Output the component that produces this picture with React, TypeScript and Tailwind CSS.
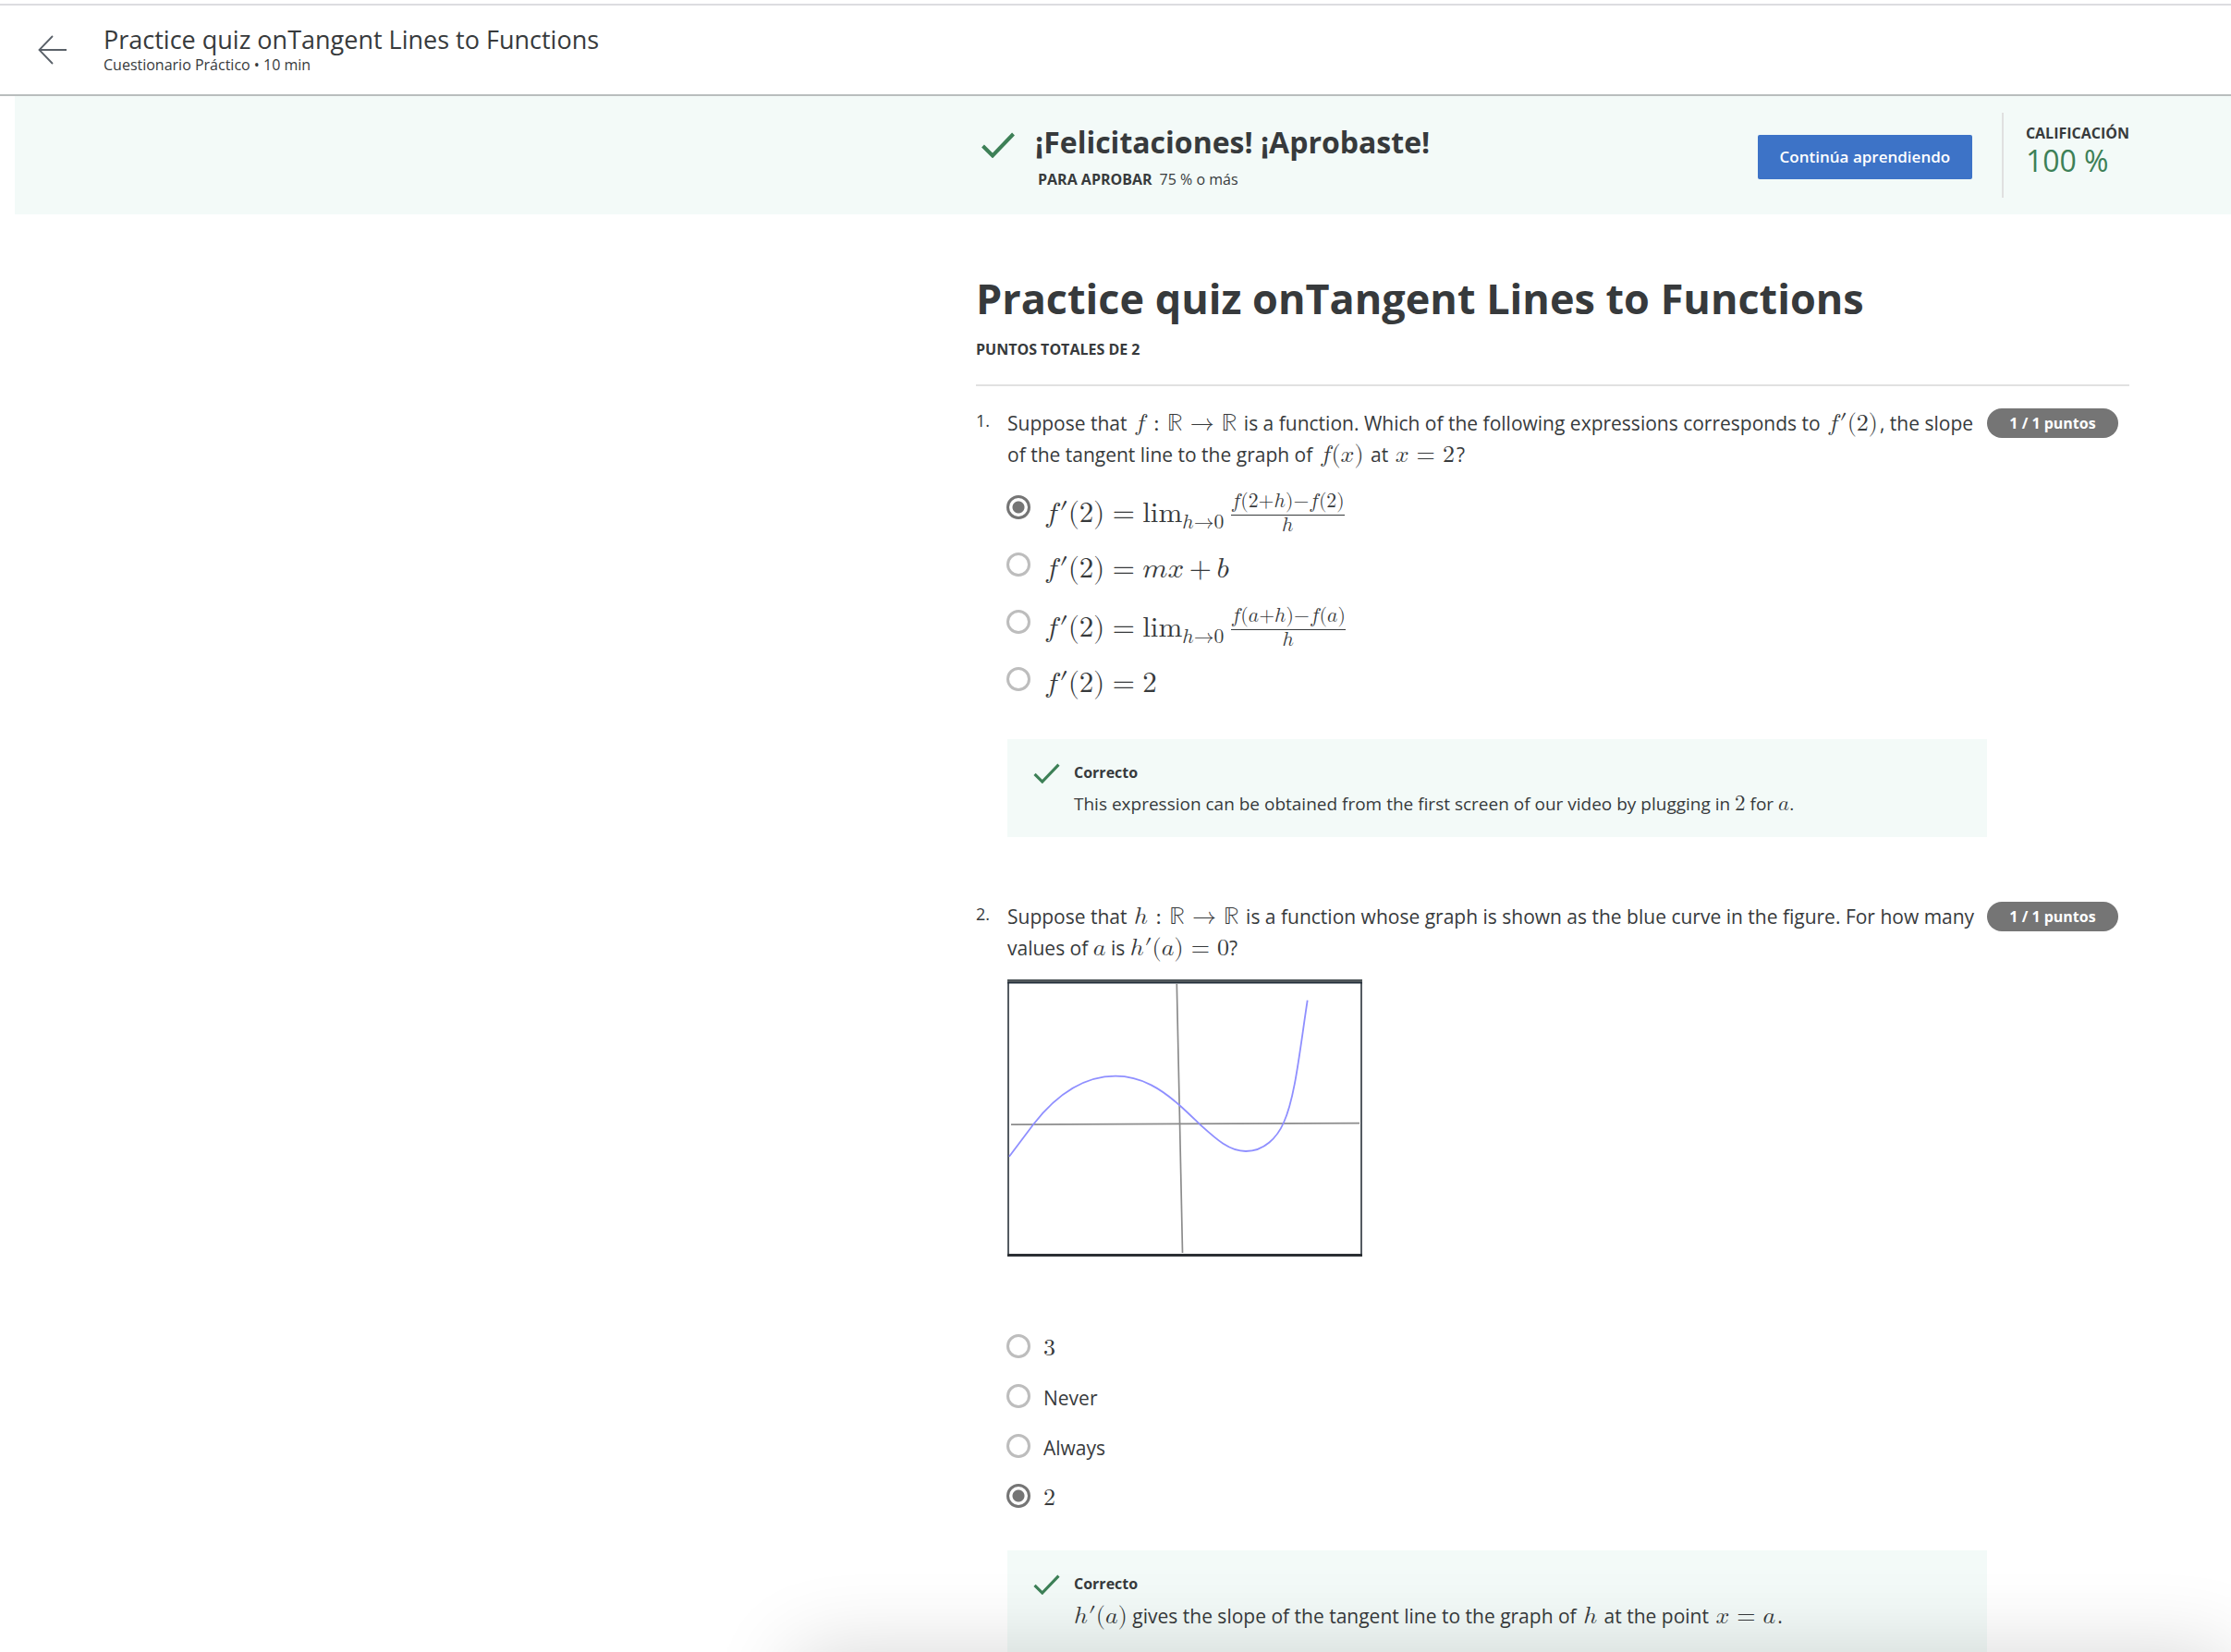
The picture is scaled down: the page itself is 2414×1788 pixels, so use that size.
import type { ReactNode } from "react";

const mathFont = "font-['Latin_Modern_Math','Liberation_Serif',serif]";

function Op({ children, gap = "0" }: { children: string; gap?: string }) {
  return (
    <mo stretchy="false" lspace={gap} rspace={gap}>
      {children}
    </mo>
  );
}

function Rel({ children, gap = "0.31em" }: { children: string; gap?: string }) {
  return <Op gap={gap}>{children}</Op>;
}

function Prime({ of }: { of: string }) {
  return (
    <mrow>
      <mi>{of}</mi>
      <mo lspace="0.03em" rspace="0">′</mo>
    </mrow>
  );
}

function Paren({ children }: { children: ReactNode }) {
  return (
    <>
      <Op>(</Op>
      {children}
      <Op>)</Op>
    </>
  );
}

function M({ children, size = "mx-[2px] text-[26px]" }: { children: ReactNode; size?: string }) {
  return <math className={`${mathFont} ${size} leading-none`}>{children}</math>;
}

function Check({ className }: { className: string }) {
  return (
    <svg viewBox="0 0 36 28" className={className} fill="none" stroke="#3d8057" strokeWidth="4" aria-hidden="true">
      <path d="M1.5 15 L12 25.5 L34.5 2" />
    </svg>
  );
}

function Radio({ name, checked, id }: { name: string; checked?: boolean; id: string }) {
  return (
    <input
      type="radio"
      id={id}
      name={name}
      defaultChecked={checked}
      className="m-0 size-[26px] shrink-0 appearance-none rounded-full border-[3px] border-[#bdbdbd] bg-white checked:border-[#757575] checked:bg-[radial-gradient(circle,#757575_0_6px,white_7px)]"
    />
  );
}

function Question({ n, text, children }: { n: number; text: ReactNode; children: ReactNode }) {
  return (
    <section className="flex items-start">
      <span className="w-[34px] shrink-0 text-[18px] leading-[30px]">{n}.</span>
      <div className="min-w-0 flex-1 pt-px">
        <p className="text-[21px] leading-[34px]">{text}</p>
        {children}
      </div>
      <div className="mt-[2px] mr-3 flex h-8 w-[142px] shrink-0 items-center justify-center rounded-full bg-[#757575] text-[16px] font-bold text-white">
        1 / 1 puntos
      </div>
    </section>
  );
}

function LimitQuotient({ v }: { v: ReactNode }) {
  return (
    <>
      <msub>
        <mi>lim</mi>
        <mrow>
          <mi>h</mi>
          <Op>→</Op>
          <mn>0</mn>
        </mrow>
      </msub>
      <mspace width="0.18em" />
      <mfrac>
        <mrow>
          <mi>f</mi>
          <Paren>
            {v}
            <Op>+</Op>
            <mi>h</mi>
          </Paren>
          <Op>−</Op>
          <mi>f</mi>
          <Paren>{v}</Paren>
        </mrow>
        <mi>h</mi>
      </mfrac>
    </>
  );
}

function Feedback({ children }: { children: ReactNode }) {
  return (
    <div className="flex gap-[15px] bg-[#f3faf8] pt-6 pr-6 pb-[14px] pl-7">
      <Check className="mt-[2px] h-[22px] w-[29px] shrink-0" />
      <div>
        <p className="text-[16px] leading-6 font-bold">Correcto</p>
        {children}
      </div>
    </div>
  );
}

const derivative = (
  <>
    <Prime of="f" />
    <Paren>
      <mn>2</mn>
    </Paren>
    <Rel gap="0.27em">=</Rel>
  </>
);

const firstOptions: ReactNode[] = [
  <LimitQuotient v={<mn>2</mn>} />,
  <>
    <mi>m</mi>
    <mi>x</mi>
    <Op gap="0.18em">+</Op>
    <mi>b</mi>
  </>,
  <LimitQuotient v={<mi>a</mi>} />,
  <mn>2</mn>,
];

const secondOptions: ReactNode[] = [
  <M size="text-[26px]"><mn>3</mn></M>,
  "Never",
  "Always",
  <M size="text-[26px]"><mn>2</mn></M>,
];

function Graph() {
  return (
    <svg viewBox="0 0 384 300" className="mt-[17px] block h-[300px] w-[384px]" fill="none" role="img" aria-label="Graph of h">
      <path d="M1 0V300M383 0V300" stroke="#2b333b" strokeWidth="1.6" />
      <path d="M0 1.5H384" stroke="#4e5559" strokeWidth="3" />
      <path d="M0 3.8H384" stroke="#232e3a" strokeWidth="1.6" />
      <path d="M0 298.5H384" stroke="#2b2f33" strokeWidth="3" />
      <path d="M183.3 5L186 130L189.5 296" stroke="#8c8c8c" strokeWidth="1.7" />
      <path d="M4 157.2L381 155.6" stroke="#8c8c8c" strokeWidth="1.7" />
      <path
        d="M2 191.7L28.3 156.7C50 129 80 104.7 117 104.7C146 104.7 168 120 186 136C194 143 200 149 208 156.7C226 173 240 186 258 186C278 186 292 171 299 155C311 129 316 80 324.7 22.7"
        stroke="#8f8fff"
        strokeWidth="1.8"
      />
    </svg>
  );
}

export default function App() {
  return (
    <div className="relative flex h-screen flex-col overflow-hidden bg-white font-['Open_Sans','Noto_Sans',sans-serif] text-[#373a3c]">
      <header className="mt-1 flex h-[100px] shrink-0 items-center border-t-2 border-b-2 border-t-[#dcdce0] border-b-[#b9bdbd] pl-[41px]">
        <button type="button" aria-label="Volver" className="mr-10 shrink-0">
          <svg viewBox="0 0 31 32" className="h-8 w-[31px]" fill="none" stroke="#5a6169" strokeWidth="1.8">
            <path d="M16 1L1.5 16L16 31M1.5 16H31" />
          </svg>
        </button>
        <div>
          <p className="mb-[2px] text-[27px] leading-[30px]">Practice quiz onTangent Lines to Functions</p>
          <p className="text-[16px] leading-5">Cuestionario Práctico • 10 min</p>
        </div>
      </header>

      <div className="ml-4 h-32 shrink-0 bg-[#f3faf8]">
        <div className="mr-[110px] ml-auto flex h-full max-w-[1248px] items-start">
          <Check className="mt-[39px] ml-[6px] h-7 w-9 shrink-0" />
          <div className="mt-6 ml-[22px]">
            <p className="text-[32px] leading-[52px] font-bold">¡Felicitaciones! ¡Aprobaste!</p>
            <p className="mt-[2px] ml-[3px] text-[16px] leading-6">
              <b>PARA APROBAR</b>
              <span className="ml-2">75 % o más</span>
            </p>
          </div>
          <button type="button" className="mt-[42px] ml-auto h-12 w-[232px] shrink-0 rounded-[2px] bg-[#3d73c7] text-[17px] font-semibold text-white">
            Continúa aprendiendo
          </button>
          <div className="mt-[18px] ml-8 h-[92px] border-l-2 border-[#e0e0e0] pt-[10px] pl-6">
            <p className="text-[16px] leading-6 font-bold">CALIFICACIÓN</p>
            <p className="text-[32px] leading-9 text-[#3d8057]">100 %</p>
          </div>
        </div>
      </div>

      <main className="mr-[110px] ml-auto w-full max-w-[1248px]">
        <h1 className="mt-[60px] text-[45px] leading-[62px] font-bold">Practice quiz onTangent Lines to Functions</h1>
        <p className="mt-3 text-[16px] leading-6 font-bold">PUNTOS TOTALES DE 2</p>
        <hr className="mt-[26px] mb-[22px] border-t-2 border-[#e1e1e1]" />

        <Question
          n={1}
          text={
            <>
              Suppose that <M><mi>f</mi><Rel>:</Rel><mi>ℝ</mi><Rel>→</Rel><mi>ℝ</mi></M> is a function. Which of the following
              expressions corresponds to <M><Prime of="f" /><Paren><mn>2</mn></Paren></M>, the slope of the tangent line to the
              graph of <M><mi>f</mi><Paren><mi>x</mi></Paren></M> at <M><mi>x</mi><Rel>=</Rel><mn>2</mn></M>?
            </>
          }
        >
          <div role="radiogroup" className="-ml-px mt-[23px] mb-5">
            {firstOptions.map((o, i) => (
              <label key={i} htmlFor={`a${i}`} className="flex h-[62px] items-start gap-[15px]">
                <span className="flex pt-1">
                  <Radio id={`a${i}`} name="a" checked={i === 0} />
                </span>
                <span className="block text-[31px] leading-[38px]">
                  <M size="text-[31px]">
                    {derivative}
                    {o}
                  </M>
                </span>
              </label>
            ))}
          </div>
          <Feedback>
            <p className="text-[19px] leading-[44px]">
              This expression can be obtained from the first screen of our video by plugging in{" "}
              <M size="text-[23px]"><mn>2</mn></M> for <M size="text-[23px]"><mi>a</mi></M>.
            </p>
          </Feedback>
        </Question>

        <div className="mt-[68px]">
          <Question
            n={2}
            text={
              <>
                Suppose that <M><mi>h</mi><Rel>:</Rel><mi>ℝ</mi><Rel>→</Rel><mi>ℝ</mi></M> is a function whose graph is shown as
                the blue curve in the figure. For how many values of <M size="text-[26px]"><mi>a</mi></M> is{" "}
                <M size="text-[26px]"><Prime of="h" /><Paren><mi>a</mi></Paren><Rel>=</Rel><mn>0</mn></M>?
              </>
            }
          >
            <Graph />
            <div role="radiogroup" className="-ml-px mt-[84px] mb-[18px]">
              {secondOptions.map((o, i) => (
                <label key={i} htmlFor={`b${i}`} className="flex h-[54px] items-start gap-[14px] text-[21px] leading-[30px]">
                  <Radio id={`b${i}`} name="b" checked={i === 3} />
                  <span>{o}</span>
                </label>
              ))}
            </div>
            <Feedback>
              <p className="pb-6 text-[21px] leading-[46px]">
                <M size="text-[26px]"><Prime of="h" /><Paren><mi>a</mi></Paren></M> gives the slope of the tangent line to
                the graph of <M><mi>h</mi></M> at the point <M><mi>x</mi><Rel>=</Rel><mi>a</mi></M>.
              </p>
            </Feedback>
          </Question>
        </div>
      </main>

      <div className="pointer-events-none absolute top-full right-0 left-[860px] h-40 shadow-[0_0_90px_rgba(0,0,0,0.16)]" />
    </div>
  );
}
